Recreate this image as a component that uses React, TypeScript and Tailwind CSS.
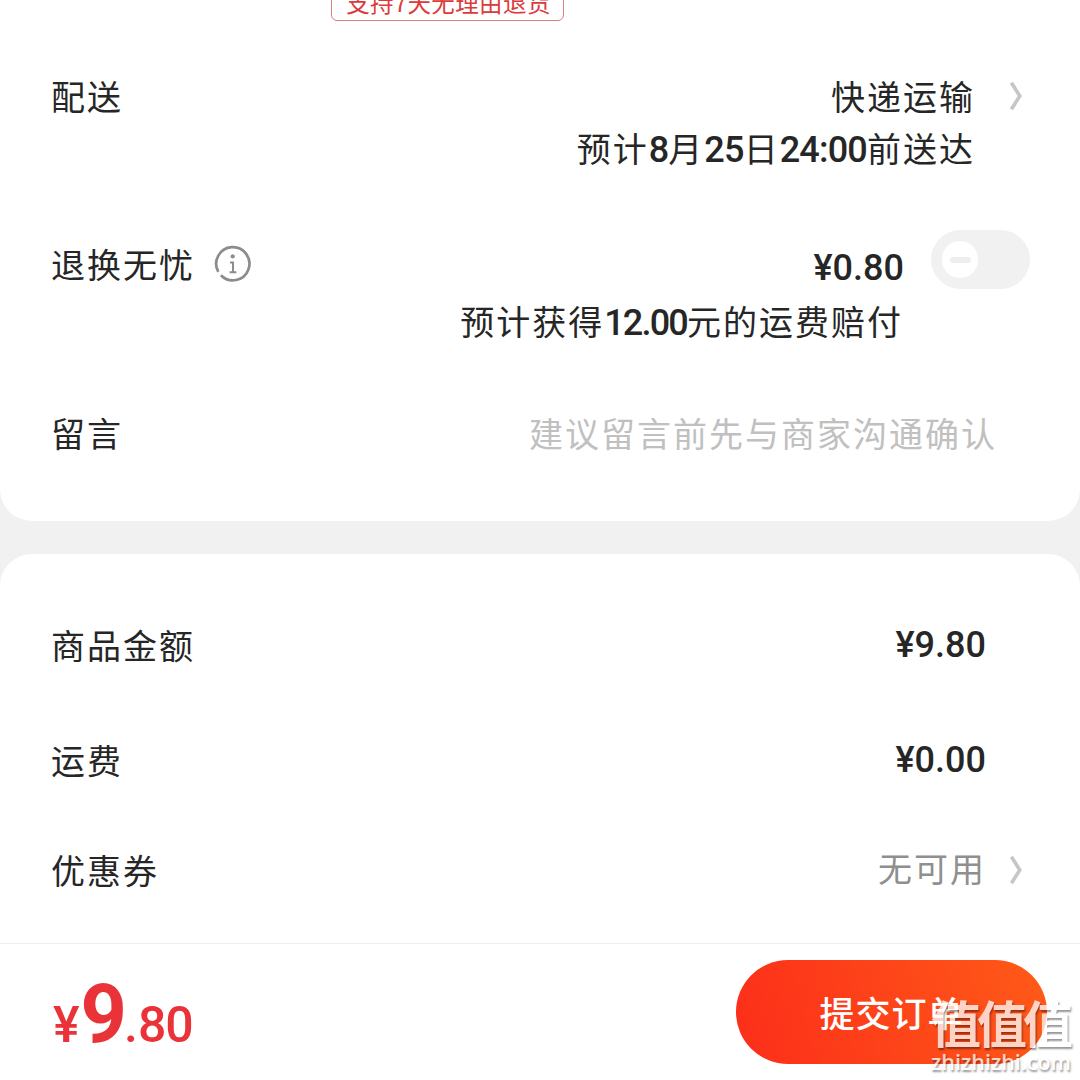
import type { ReactNode } from 'react'

function Chevron() {
  return (
    <svg width="14" height="30" viewBox="0 0 14 30" fill="none" className="shrink-0">
      <path d="M2.4 1.8L10.8 15L2.4 28.2" stroke="#c6c6c6" strokeWidth="3.6" />
    </svg>
  )
}

function InfoIcon() {
  return (
    <svg width="38" height="38" viewBox="0 0 38 38" fill="none" className="mb-[1px] ml-[19px]">
      <path d="M4.3 26.8A16.6 16.6 0 1 1 6.9 30.3" stroke="#8c8c8c" strokeWidth="2.7" />
      <circle cx="18.7" cy="11.4" r="2.1" fill="#8c8c8c" />
      <path d="M16 17.4H19V27.2M15.6 27.2H22.4" stroke="#8c8c8c" strokeWidth="2" />
    </svg>
  )
}

function Num({ children }: { children: ReactNode }) {
  return <span className="font-['Roboto'] text-[36px] font-medium tracking-[-0.8px]">{children}</span>
}

function Price({ children }: { children: ReactNode }) {
  return <span className="font-['Roboto'] text-[36px] font-medium leading-[52px] tracking-[0px]">{children}</span>
}

function Label({ children }: { children: ReactNode }) {
  return <span className="leading-[52px]">{children}</span>
}

export default function App() {
  return (
    <div className="relative flex h-[1080px] w-[1080px] flex-col overflow-hidden bg-[#f1f1f1] font-['Noto_Sans_CJK_SC',sans-serif] text-[34px] tracking-[2px] whitespace-nowrap text-[#262626]">
      <section className="h-[521px] shrink-0 rounded-b-[32px] bg-white">
        <div className="flex h-[21px] items-end pl-[331px]">
          <div className="flex h-[42px] w-[233px] shrink-0 items-center justify-center rounded-[6px] border border-[#d98080] pt-[6px] pl-[2px] text-[23.5px] tracking-[0.4px] text-[#dc3a3a]">
            支持7天无理由退货
          </div>
        </div>

        <div className="flex items-start justify-between pt-[49px] pr-[57px] pl-[51px]">
          <Label>配送</Label>
          <div className="flex items-start">
            <div className="flex flex-col items-end pr-[34px] leading-[52px]">
              <span>快递运输</span>
              <span>
                预计<Num>8</Num>月<Num>25</Num>日<Num>24:00</Num>前送达
              </span>
            </div>
            <div className="flex h-[52px] items-center">
              <Chevron />
            </div>
          </div>
        </div>

        <div className="flex items-start justify-between pt-[62px] pr-[50px] pl-[51px]">
          <div className="flex items-center">
            <Label>退换无忧</Label>
            <InfoIcon />
          </div>
          <div className="flex items-start">
            <div className="flex flex-col items-end pt-[4px] pr-[27px]">
              <Price>¥0.80</Price>
              <span className="pr-[1px] leading-[54px]">
                预计获得<span className="font-['Roboto'] text-[36px] font-medium tracking-[-1.8px]">12.00</span>元的运费赔付
              </span>
            </div>
            <div className="-mt-[8px] flex h-[59px] w-[99px] items-center rounded-full bg-[#f1f1f1] pl-[11px]">
              <div className="flex h-[37px] w-[36px] items-center justify-center rounded-full bg-white">
                <div className="h-[6px] w-[21px] rounded-full bg-[#eeeeee]" />
              </div>
            </div>
          </div>
        </div>

        <div className="flex items-center justify-between pt-[57px] pr-[83px] pl-[51px]">
          <Label>留言</Label>
          <span className="leading-[52px] text-[#c0c0c0]">建议留言前先与商家沟通确认</span>
        </div>
      </section>

      <section className="mt-[33px] h-[389px] shrink-0 rounded-t-[32px] bg-white pl-[51px]">
        <div className="flex items-center justify-between pt-[65px] pr-[94px]">
          <Label>商品金额</Label>
          <Price>¥9.80</Price>
        </div>
        <div className="flex items-center justify-between pt-[63px] pr-[94px]">
          <Label>运费</Label>
          <Price>¥0.00</Price>
        </div>
        <div className="flex items-center justify-between pt-[56px] pr-[57px]">
          <Label>优惠券</Label>
          <div className="flex items-center">
            <span className="pr-[23px] pb-[4px] leading-[52px] text-[#8f8f8f]">无可用</span>
            <Chevron />
          </div>
        </div>
      </section>

      <footer className="flex h-[137px] shrink-0 items-start justify-between border-t border-[#eee] bg-white pr-[33px] pl-[53px]">
        <div className="flex items-baseline pt-[26px] font-['Roboto'] font-medium text-[#e93338]">
          <span className="text-[50px] leading-[90px] tracking-[1px]">¥</span>
          <span className="text-[81px] leading-[90px] font-bold tracking-[-3px]">9</span>
          <span className="text-[50px] leading-[90px] tracking-[0px]">.</span>
          <span className="text-[50px] leading-[90px] tracking-[-1px]">80</span>
        </div>
        <button className="mt-[16px] flex h-[104px] w-[311px] items-center justify-center rounded-full bg-linear-[75deg] from-[#fc2e1a] to-[#ff5a18] text-[35px] font-medium tracking-[1px] text-white">
          提交订单
        </button>
      </footer>

      <div className="absolute top-[992px] left-[931px] flex flex-col text-white opacity-75 [text-shadow:1px_2px_2px_rgba(0,0,0,0.55)]">
        <span className="text-[50px] font-bold leading-[58px] tracking-[-4px]">值值值</span>
        <span className="font-['Open_Sans'] text-[21.5px] font-semibold leading-[24px] tracking-[0px]">zhizhizhi.com</span>
      </div>
    </div>
  )
}
